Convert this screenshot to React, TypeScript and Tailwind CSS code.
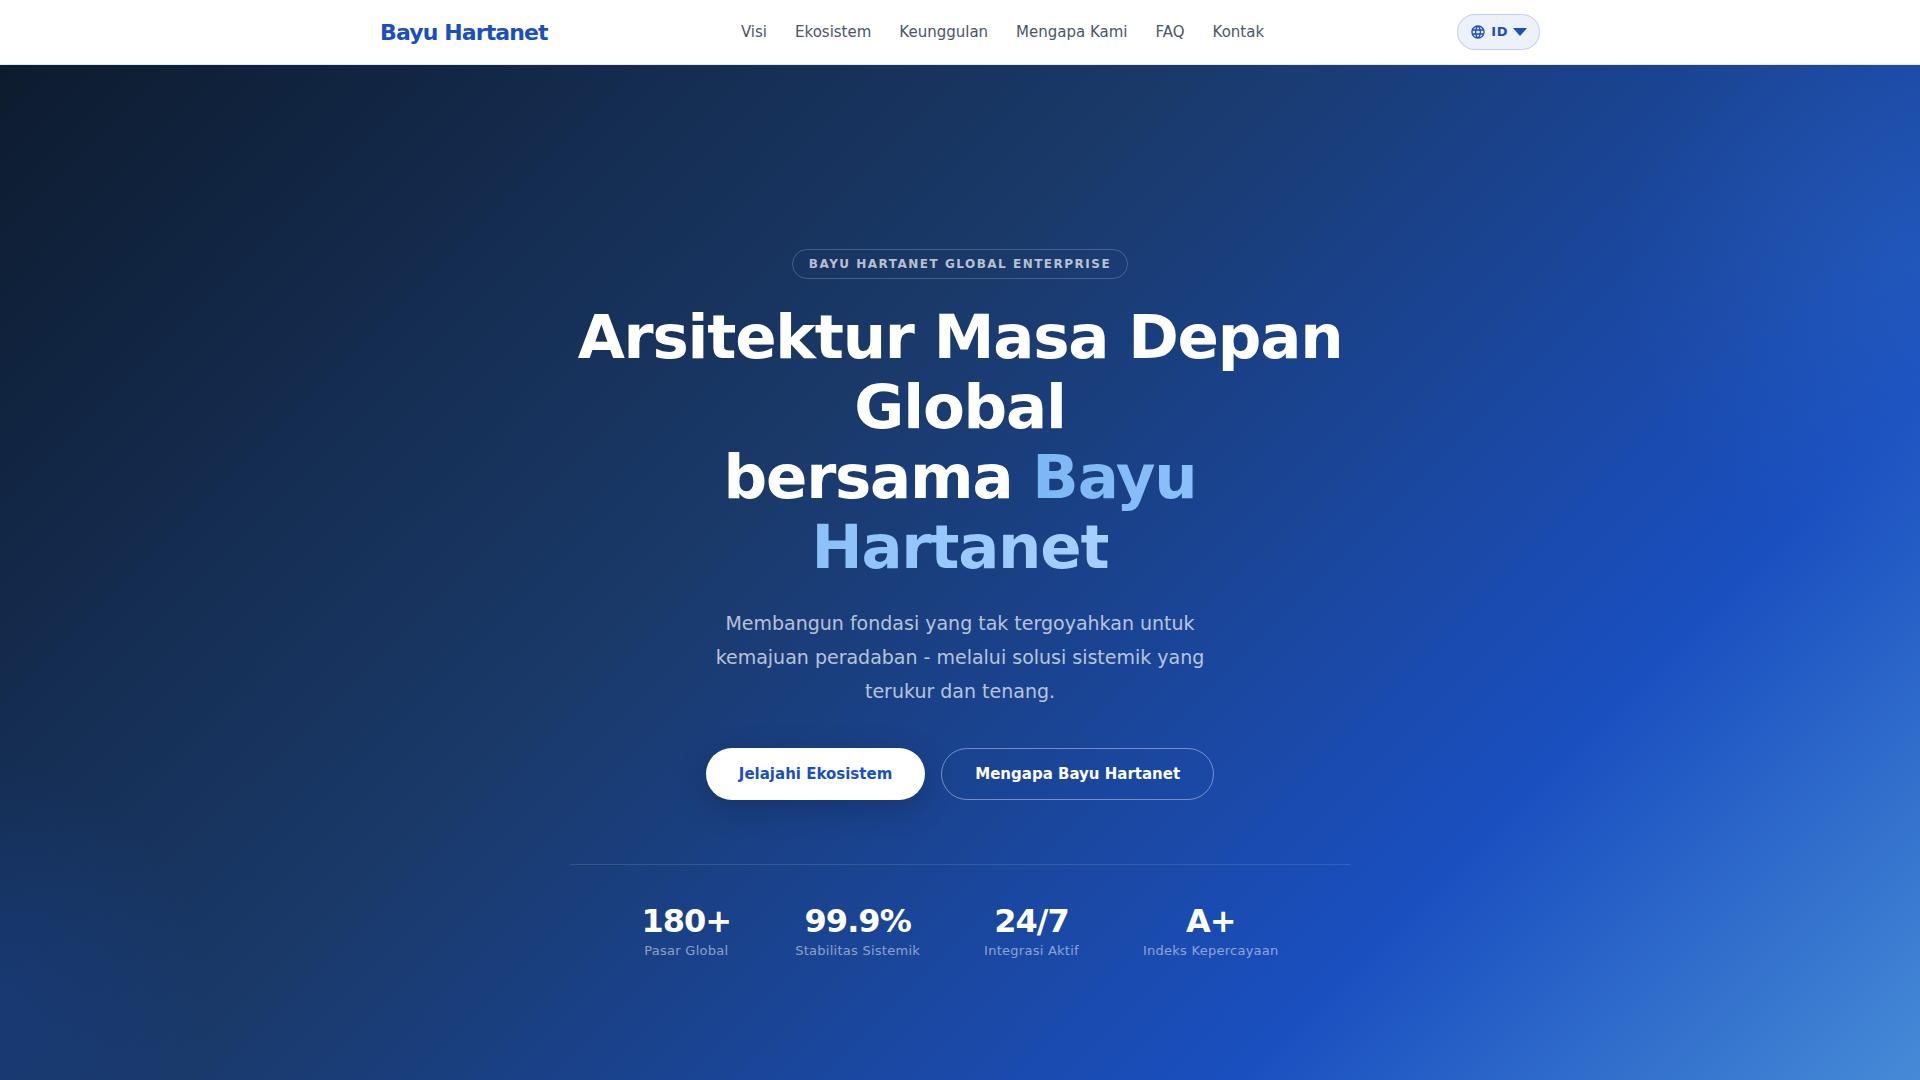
import React from 'react'
import { MdLanguage } from 'react-icons/md'

const navLinks = [
  { label: 'Visi', href: '#visi' },
  { label: 'Ekosistem', href: '#ekosistem' },
  { label: 'Keunggulan', href: '#keunggulan' },
  { label: 'Mengapa Kami', href: '#mengapa' },
  { label: 'FAQ', href: '#faq' },
  { label: 'Kontak', href: '#kontak' },
]

const stats = [
  { value: '180+', label: 'Pasar Global' },
  { value: '99.9%', label: 'Stabilitas Sistemik' },
  { value: '24/7', label: 'Integrasi Aktif' },
  { value: 'A+', label: 'Indeks Kepercayaan' },
]

function Header() {
  return (
    <header className="sticky top-0 z-10 bg-white border-b border-[#e2e8f0]">
      <div className="max-w-[1200px] h-16 mx-auto px-5 flex items-center justify-between">
        <a href="#" className="text-[22px] font-bold tracking-[-0.04em] text-[#1a4fc0]">
          Bayu Hartanet
        </a>

        <nav className="flex items-center gap-7">
          {navLinks.map((link) => (
            <a key={link.href} href={link.href} className="text-[15px] text-[#4a5568]">
              {link.label}
            </a>
          ))}
        </nav>

        <button
          type="button"
          aria-label="Pilih bahasa"
          className="h-9 px-3 flex items-center gap-[5px] rounded-full border border-[#1a4fc0]/20 bg-[#1a4fc0]/8 text-[13px] font-bold tracking-[0.04em] text-[#1a4fc0]"
        >
          <MdLanguage className="size-4" />
          ID
          <svg className="w-3.5 h-2" viewBox="0 0 14 8" fill="currentColor">
            <path d="M0 0h14L7 8z" />
          </svg>
        </button>
      </div>
    </header>
  )
}

function Hero() {
  return (
    <section className="relative min-h-screen px-6 flex items-center justify-center overflow-hidden bg-[linear-gradient(135deg,#0d1b2e_0%,#1a3a6b_40%,#1a4fc0_75%,#4a90d9_100%)]">
      {/* Soft glows behind the content */}
      <div className="absolute -top-[10%] -right-[15%] size-[600px] rounded-full bg-[radial-gradient(circle,rgba(74,144,217,0.15)_0%,transparent_70%)]" />
      <div className="absolute -bottom-[10%] -left-[15%] size-[500px] rounded-full bg-[radial-gradient(circle,rgba(26,79,192,0.25)_0%,transparent_70%)]" />

      <div className="relative w-full max-w-[780px] flex flex-col items-center text-center">
        <span className="mb-[23px] px-4 py-1.5 rounded-full border border-white/20 text-[12px] leading-4 font-bold tracking-[1.5px] uppercase text-white/70">
          Bayu Hartanet Global Enterprise
        </span>

        <h1 className="mb-6 text-[61px] leading-[70px] font-bold tracking-[-0.02em] text-white">
          Arsitektur Masa Depan Global
          <br />
          bersama{' '}
          <span className="bg-[linear-gradient(90deg,#7ab8f5,#a8d0ff)] bg-clip-text text-transparent">
            Bayu Hartanet
          </span>
        </h1>

        <p className="max-w-[540px] mb-10 text-[19px] leading-[34px] text-white/70">
          Membangun fondasi yang tak tergoyahkan untuk kemajuan peradaban - melalui solusi sistemik
          yang terukur dan tenang.
        </p>

        <div className="mb-16 flex flex-wrap justify-center gap-4">
          <a
            href="#ekosistem"
            className="h-[52px] px-[33px] flex items-center rounded-full bg-white text-[15px] font-bold text-[#1a4fc0] shadow-[0_8px_32px_rgba(0,0,0,0.2)]"
          >
            Jelajahi Ekosistem
          </a>
          <a
            href="#mengapa"
            className="h-[52px] px-[33px] flex items-center rounded-full border border-white/40 text-[15px] font-bold text-white"
          >
            Mengapa Bayu Hartanet
          </a>
        </div>

        <div className="w-full pt-9 flex flex-wrap justify-center gap-x-16 gap-y-8 border-t border-white/12">
          {stats.map((stat) => (
            <div key={stat.label}>
              <div className="text-[32px] leading-10 font-bold tracking-[-0.03em] text-white">{stat.value}</div>
              <div className="text-[13px] leading-5 tracking-[0.02em] text-white/50">{stat.label}</div>
            </div>
          ))}
        </div>
      </div>
    </section>
  )
}

export default function App() {
  return (
    <div className="font-['DejaVu_Sans',sans-serif]">
      <Header />
      <main>
        <Hero />
      </main>
    </div>
  )
}
